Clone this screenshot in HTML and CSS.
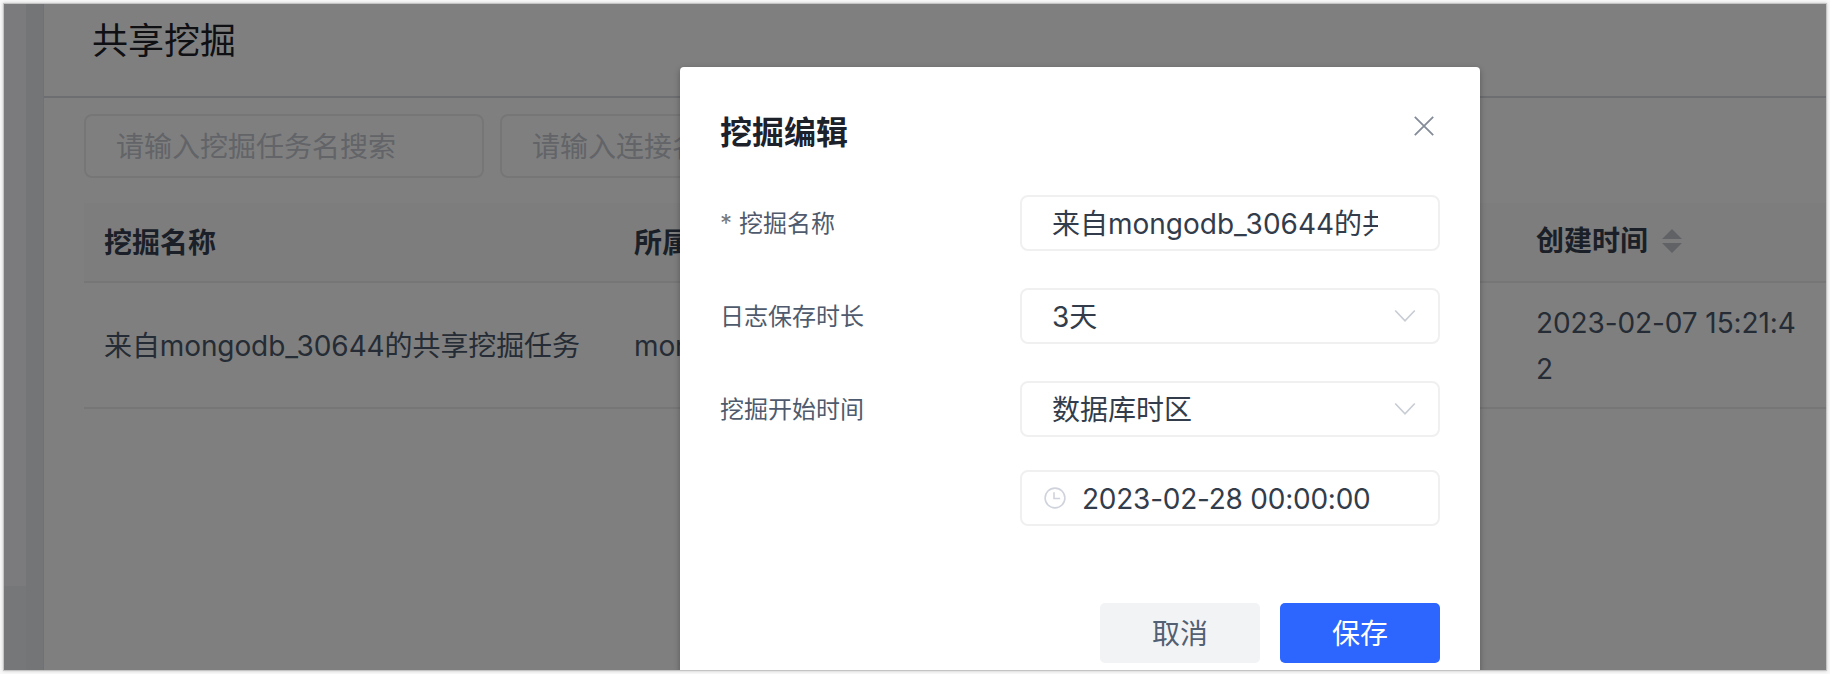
FILE: index.html
```html
<!DOCTYPE html>
<html lang="zh-CN">
<head>
<meta charset="utf-8">
<title>共享挖掘</title>
<link rel="stylesheet" href="styles.css">
</head>
<body>
<div class="window">
  <div class="app">
    <aside class="sidebar"><div class="sidebar-menu"></div><div class="sidebar-foot"></div></aside>
    <div class="gutter"></div>
    <main class="main">
      <header class="page-header"><h1 class="page-title">共享挖掘</h1></header>
      <section class="content">
        <div class="filters">
          <div class="search">请输入挖掘任务名搜索</div>
          <div class="search">请输入连接名搜索</div>
        </div>
        <div class="table">
          <div class="row head">
            <div class="cell">挖掘名称</div>
            <div class="cell">所属连接</div>
            <div class="cell sortable">创建时间
              <svg class="sort" width="20" height="24" viewBox="0 0 20 24"><path d="M0 10 10 0l10 10zM0 14h20L10 24z" fill="currentColor"/></svg>
            </div>
          </div>
          <div class="row">
            <div class="cell">来自mongodb_30644的共享挖掘任务</div>
            <div class="cell">mongodb</div>
            <div class="cell wrap">2023-02-07 15:21:42</div>
          </div>
        </div>
      </section>
    </main>
  </div>
  <div class="overlay">
    <div class="dialog" role="dialog">
      <div class="dialog-header">
        <h2 class="dialog-title">挖掘编辑</h2>
        <svg class="close" width="20" height="20" viewBox="0 0 20 20"><path d="M.8.8l18.4 18.4M19.2.8.8 19.2" fill="none" stroke="currentColor" stroke-width="1.8"/></svg>
      </div>
      <div class="form">
        <div class="field">
          <label class="label"><span class="star">*</span>挖掘名称</label>
          <div class="input"><span class="value">来自mongodb_30644的共享挖掘任务</span></div>
        </div>
        <div class="field">
          <label class="label">日志保存时长</label>
          <div class="input"><span class="value">3天</span><svg class="arrow" width="22" height="14" viewBox="0 0 22 14"><path d="M1.2 1.5 11 11.8l9.8-10.3" fill="none" stroke="currentColor" stroke-width="1.7"/></svg></div>
        </div>
        <div class="field">
          <label class="label">挖掘开始时间</label>
          <div class="input"><span class="value">数据库时区</span><svg class="arrow" width="22" height="14" viewBox="0 0 22 14"><path d="M1.2 1.5 11 11.8l9.8-10.3" fill="none" stroke="currentColor" stroke-width="1.7"/></svg></div>
        </div>
        <div class="field tight">
          <span class="label"></span>
          <div class="input date"><svg class="clock" width="22" height="22" viewBox="0 0 22 22"><g fill="none" stroke="currentColor" stroke-width="1.6"><circle cx="11" cy="11" r="9.9"/><path d="M10 5.2v6.3h6.2"/></g></svg><span class="value">2023-02-28 00:00:00</span></div>
        </div>
      </div>
      <div class="dialog-footer">
        <button class="btn">取消</button>
        <button class="btn primary">保存</button>
      </div>
    </div>
  </div>
</div>
</body>
</html>
```

FILE: styles.css
```css
* { box-sizing: border-box; }
html, body { height: 100%; overflow: hidden; }
body {
  margin: 0;
  padding: 4px;
  background: #f8f8f8;
  font: 28px/46px Inter, "Noto Sans CJK SC", sans-serif;
  color: #4b586a;
}
h1, h2 { margin: 0; }
.window {
  position: relative;
  height: 666px;
  width: 1822px;
  overflow: hidden;
  outline: 1px solid #c4c4c4;
  box-shadow: 0 0 3px 1px rgba(0, 0, 0, .2);
}
.app { display: flex; height: 100%; background: #fff; }
.sidebar { width: 22px; display: flex; flex-direction: column; background: #f7f7fa; }
.sidebar-menu { height: 582px; }
.sidebar-foot { flex: 1; background: #eceff3; }
.gutter { width: 18px; background: #e8ebef; border-right: 1px solid #dfe3ea; }
.main { flex: 1; min-width: 0; }
.page-header {
  height: 94px;
  padding-left: 48px;
  border-bottom: 2px solid #d8dde5;
}
.page-title { font-size: 36px; font-weight: 400; line-height: 74px; color: #1d2129; }
.content { padding: 16px 0 0 40px; }
.filters { display: flex; gap: 16px; }
.search {
  width: 400px;
  height: 64px;
  padding-left: 30px;
  border: 2px solid #ededed;
  border-radius: 8px;
  line-height: 62px;
  color: #c4c8d0;
}
.table { margin-top: 25px; }
.row {
  display: grid;
  grid-template-columns: 530px 902px 1fr;
  align-items: center;
  height: 126px;
  padding-top: 1px;
  border-bottom: 2px solid #ececec;
  letter-spacing: -.1px;
}
.head { height: 80px; background: #fafafa; font-weight: 600; color: #364150; letter-spacing: 0; }
.cell { padding-left: 20px; white-space: nowrap; }
.sortable { display: flex; align-items: center; gap: 14px; padding-bottom: 4px; }
.sort { color: #c0c4cc; }
.wrap { width: 290px; white-space: normal; word-break: break-all; }
.overlay {
  position: absolute;
  inset: 0;
  padding: 63px 0 0 676px;
  background: rgba(0, 0, 0, .5);
}
.dialog {
  width: 800px;
  height: 700px;
  padding: 40px;
  background: #fff;
  border-radius: 4px;
  box-shadow: 0 2px 6px rgba(0, 0, 0, .3);
}
.dialog-header { display: flex; justify-content: space-between; height: 88px; }
.dialog-title { font-size: 32px; font-weight: 600; line-height: 51px; color: #1d2129; }
.close { margin: 9px 6px 0 0; color: #858c98; }
.form { display: flex; flex-direction: column; gap: 37px; }
.field { display: flex; height: 56px; }
.tight { margin-top: -4px; }
.label { width: 300px; font-size: 24px; line-height: 58px; color: #4f5b6d; }
.star { margin-right: 7px; color: #777; }
.input {
  display: flex;
  align-items: center;
  width: 420px;
  padding: 0 22px 0 30px;
  border: 2px solid #f0f0f0;
  border-radius: 8px;
  color: #333c4a;
}
.value { width: 326px; padding-top: 2px; overflow: hidden; white-space: nowrap; }
.arrow { margin-left: 17px; flex: none; color: #c9cdd4; }
.date { padding-left: 22px; letter-spacing: -.24px; }
.clock { margin-right: 16px; color: #d0d3dc; }
.dialog-footer { display: flex; justify-content: flex-end; gap: 20px; margin-top: 77px; }
.btn {
  width: 160px;
  height: 60px;
  padding: 2px 0 0;
  border: 0;
  border-radius: 5px;
  font: inherit;
  color: #535f72;
  background: #f2f3f5;
}
.primary { color: #fff; background: #2c65ff; }
```
